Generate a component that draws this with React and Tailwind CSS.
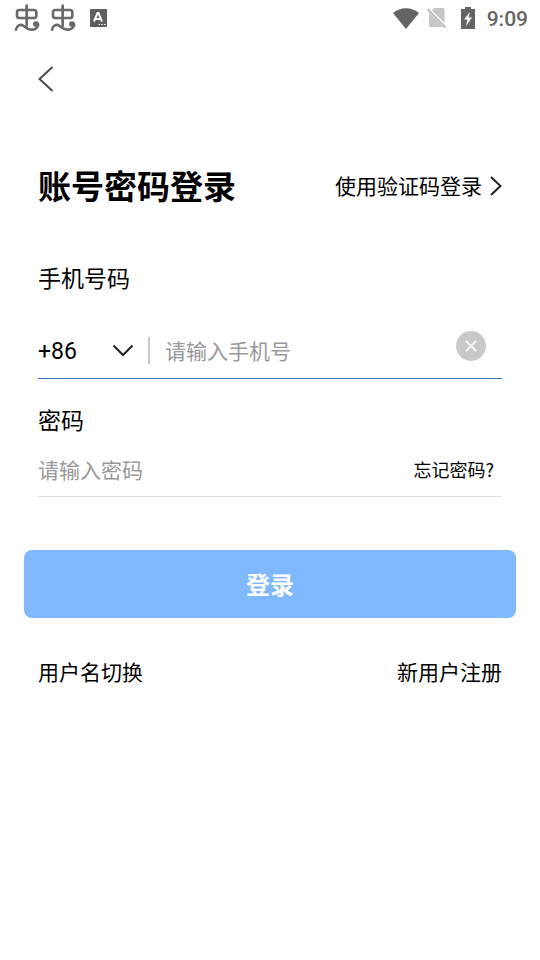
import { useState } from "react";

const BugIcon = () => (
  <svg
    width="26"
    height="28"
    viewBox="0 0 78 84"
    fill="none"
    stroke="#6a6a6a"
    strokeWidth="8"
    strokeLinecap="round"
    aria-hidden="true"
  >
    <rect x="9" y="18" width="58" height="24" rx="7" />
    <path d="M38 5V65" />
    <path d="M6 77C8 64 19 59 29 66C40 75 52 80 63 75C73 69 74 62 70 57" />
    <circle cx="65" cy="60" r="8" fill="#6a6a6a" stroke="none" />
  </svg>
);

const KeyboardIcon = () => (
  <svg width="17" height="18" viewBox="0 0 17 18" aria-hidden="true">
    <rect width="17" height="18" rx="1" fill="#5f5f5f" />
    <path
      d="M4 12.500L7.500 4H8.500L12 12.500M5.300 10H10.700"
      fill="none"
      stroke="white"
      strokeWidth="2"
    />
    <path d="M8.500 15.500H10M11.200 15.500H12.700M13.900 15.500H15.400" stroke="white" />
  </svg>
);

const WifiIcon = () => (
  <svg width="26" height="21" viewBox="0 0 26 21" aria-hidden="true">
    <path d="M0 5C7 -1.500 19 -1.500 26 5L13 21Z" fill="#646464" />
  </svg>
);

const NoSimIcon = () => (
  <svg width="20" height="20" viewBox="0 0 20 20" aria-hidden="true">
    <path d="M7 0H16Q17.500 0 17.500 1.500V15L5 2.500ZM2 4.500L16.500 19H3.500Q2 19 2 17.500Z" fill="#c6c6c6" />
    <path d="M0.500 1L18.500 19.500" stroke="#bdbdbd" strokeWidth="2" />
  </svg>
);

const BatteryIcon = () => (
  <svg width="14" height="22" viewBox="0 0 14 22" aria-hidden="true">
    <path d="M4 0H10V2H14V22H0V2H4Z" fill="#646464" />
    <path d="M9 5L3 12.500H6.500L5 19L11 10.500H7.500Z" fill="white" />
  </svg>
);

const StatusBar = () => (
  <div className="flex h-9 items-center justify-between pl-3.5 pr-3">
    <div className="flex items-center">
      <BugIcon />
      <div className="ml-2.5 mr-3.5">
        <BugIcon />
      </div>
      <KeyboardIcon />
    </div>
    <div className="flex items-center">
      <WifiIcon />
      <div className="ml-2 mr-3.5">
        <NoSimIcon />
      </div>
      <BatteryIcon />
      <span className="ml-3 pt-0.5 font-['Roboto',sans-serif] text-[21px] leading-8 font-medium text-[#646464]">
        9:09
      </span>
    </div>
  </div>
);

const App = () => {
  const [areaCode, setAreaCode] = useState("+86");
  const [phone, setPhone] = useState("");
  const [password, setPassword] = useState("");

  return (
    <div className="min-h-screen bg-white font-['Noto_Sans_CJK_SC',sans-serif] text-black">
      <StatusBar />
      <header className="flex h-[86px] items-center px-[38px]">
        <button type="button" aria-label="返回">
          <svg
            width="16"
            height="26"
            viewBox="0 0 16 26"
            fill="none"
            stroke="#4a4a4a"
            strokeWidth="2"
          >
            <path d="M14.500 1L1.500 13L14.500 25" />
          </svg>
        </button>
      </header>

      <form onSubmit={(e) => e.preventDefault()}>
        <div className="px-[38px] pt-10">
          <div className="flex h-12 items-center justify-between">
            <h1 className="text-[33px] font-bold">账号密码登录</h1>
            <a href="#code" className="flex items-center gap-2 text-[21px]">
              使用验证码登录
              <svg
                width="12"
                height="20"
                viewBox="0 0 12 20"
                fill="none"
                stroke="#222222"
                strokeWidth="2"
                aria-hidden="true"
              >
                <path d="M1 1L10.500 10L1 19" />
              </svg>
            </a>
          </div>

          <label htmlFor="phone" className="mt-[51px] block text-[23px] leading-8">
            手机号码
          </label>
          <div className="mt-[30px] flex h-14 items-center border-b border-[#3875c4]">
            <div className="relative w-[110px]">
              <select
                aria-label="区号"
                value={areaCode}
                onChange={(e) => setAreaCode(e.target.value)}
                className="w-full appearance-none bg-transparent pt-0.5 font-['Roboto',sans-serif] text-[23px] leading-8 outline-none"
              >
                <option>+86</option>
                <option>+852</option>
                <option>+853</option>
                <option>+886</option>
              </select>
              <svg
                className="pointer-events-none absolute right-3.5 top-2.5"
                width="22"
                height="13"
                viewBox="0 0 22 13"
                fill="none"
                stroke="#222222"
                strokeWidth="2"
                aria-hidden="true"
              >
                <path d="M1.500 1.500L11 11L20.500 1.500" />
              </svg>
            </div>
            <div className="h-[27px] w-0.5 bg-[#c8c8c8]" />
            <input
              id="phone"
              type="tel"
              placeholder="请输入手机号"
              value={phone}
              onChange={(e) => setPhone(e.target.value)}
              className="ml-[15px] min-w-0 flex-1 pb-0.5 text-[21px] leading-8 outline-none placeholder:text-[#999999]"
            />
            <button
              type="button"
              aria-label="清除"
              onClick={() => setPhone("")}
              className="mr-4 mt-2 flex size-[30px] items-center justify-center self-start rounded-full bg-[#c8c8c8]"
            >
              <svg
                width="12"
                height="12"
                viewBox="0 0 12 12"
                stroke="#f4f4f4"
                strokeWidth="2"
                aria-hidden="true"
              >
                <path d="M1 1L11 11M11 1L1 11" />
              </svg>
            </button>
          </div>

          <label htmlFor="password" className="mt-6 block text-[23px] leading-8">
            密码
          </label>
          <div className="mt-2 flex h-[54px] items-center border-b border-[#e2e2e2]">
            <input
              id="password"
              type="password"
              placeholder="请输入密码"
              value={password}
              onChange={(e) => setPassword(e.target.value)}
              className="min-w-0 flex-1 pb-0.5 text-[21px] leading-8 outline-none placeholder:text-[#999999]"
            />
            <a href="#forgot" className="mr-2 text-[18px]">
              忘记密码?
            </a>
          </div>
        </div>

        <div className="mt-[53px] px-6">
          <button
            type="submit"
            className="h-[68px] w-full rounded-lg bg-[#80b8ff] text-2xl font-bold text-white"
          >
            登录
          </button>
        </div>
      </form>

      <div className="mt-[37px] flex justify-between px-[38px] text-[21px] leading-8">
        <a href="#username">用户名切换</a>
        <a href="#register">新用户注册</a>
      </div>
    </div>
  );
};

export default App;
